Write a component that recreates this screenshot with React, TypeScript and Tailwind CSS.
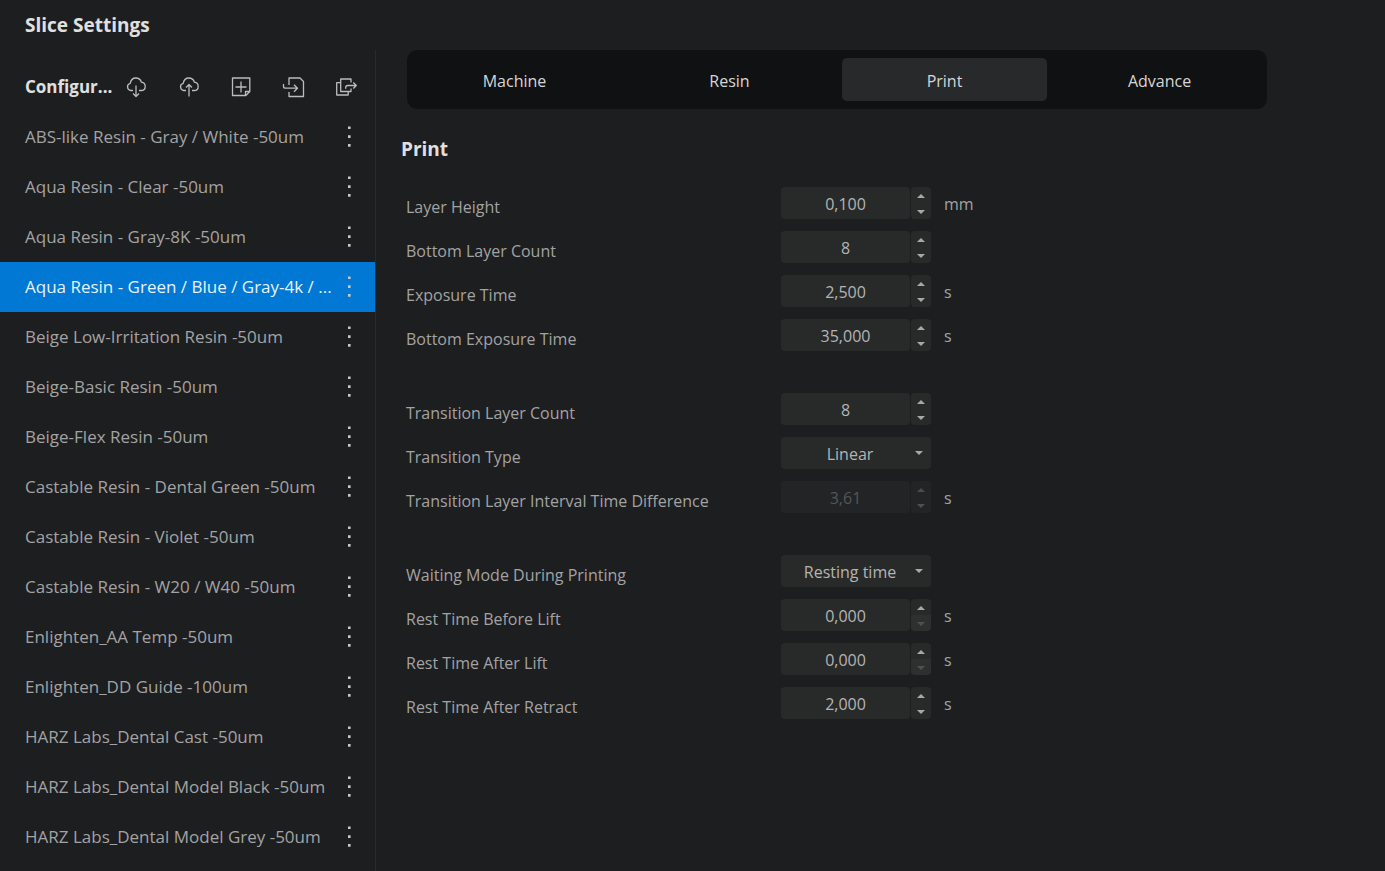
import { useState } from 'react';
import type { ReactNode } from 'react';

type Field = {
  id: string;
  label: string;
  value: string;
  unit?: string;
  decimals?: number;
  options?: string[];
  disabled?: boolean;
};

const profiles = [
  'ABS-like Resin - Gray / White -50um',
  'Aqua Resin - Clear -50um',
  'Aqua Resin - Gray-8K -50um',
  'Aqua Resin - Green / Blue / Gray-4k / ...',
  'Beige Low-Irritation Resin -50um',
  'Beige-Basic Resin -50um',
  'Beige-Flex Resin -50um',
  'Castable Resin - Dental Green -50um',
  'Castable Resin - Violet -50um',
  'Castable Resin - W20 / W40 -50um',
  'Enlighten_AA Temp -50um',
  'Enlighten_DD Guide -100um',
  'HARZ Labs_Dental Cast -50um',
  'HARZ Labs_Dental Model Black -50um',
  'HARZ Labs_Dental Model Grey -50um',
];

const tabs = ['Machine', 'Resin', 'Print', 'Advance'];

const groups: Field[][] = [
  [
    { id: 'layer-height', label: 'Layer Height', value: '0,100', unit: 'mm', decimals: 3 },
    { id: 'bottom-layers', label: 'Bottom Layer Count', value: '8' },
    { id: 'exposure', label: 'Exposure Time', value: '2,500', unit: 's', decimals: 3 },
    { id: 'bottom-exposure', label: 'Bottom Exposure Time', value: '35,000', unit: 's', decimals: 3 },
  ],
  [
    { id: 'transition-layers', label: 'Transition Layer Count', value: '8' },
    { id: 'transition-type', label: 'Transition Type', value: 'Linear', options: ['Linear'] },
    {
      id: 'transition-diff',
      label: 'Transition Layer Interval Time Difference',
      value: '3,61',
      unit: 's',
      decimals: 2,
      disabled: true,
    },
  ],
  [
    { id: 'waiting-mode', label: 'Waiting Mode During Printing', value: 'Resting time', options: ['Resting time'] },
    { id: 'rest-before-lift', label: 'Rest Time Before Lift', value: '0,000', unit: 's', decimals: 3 },
    { id: 'rest-after-lift', label: 'Rest Time After Lift', value: '0,000', unit: 's', decimals: 3 },
    { id: 'rest-after-retract', label: 'Rest Time After Retract', value: '2,000', unit: 's', decimals: 3 },
  ],
];

const cloudPath =
  'M7 13.5H4.600A3.700 3.700 0 0 1 4.200 6.300C4.800 3.200 6.900 1 9.800 1c2.700 0 4.800 1.500 5.600 4.200 2.200.3 3.800 2 3.800 4.200 0 2.400-1.700 4.100-4 4.100H13';

const toolbar: { name: string; icon: ReactNode }[] = [
  {
    name: 'Download',
    icon: (
      <>
        <path d={cloudPath} />
        <path d="M10 8.5v11M7 16.5l3 3 3-3" />
      </>
    ),
  },
  {
    name: 'Upload',
    icon: (
      <>
        <path d={cloudPath} />
        <path d="M10 19.5v-12M7 10.5l3-3 3 3" />
      </>
    ),
  },
  {
    name: 'New',
    icon: (
      <>
        <path d="M1.5 1h17.3v13.5l-4 4H1.5z" />
        <path d="M14.5 18.5v-4h4.3M10 4.5v11M4.5 10h11" />
      </>
    ),
  },
  {
    name: 'Import',
    icon: (
      <>
        <path d="M5 8V1h11l3.500 3.500V19.500H5v-4.500" />
        <path d="M-.5 7v2.200q0 2 2 2h12M10 7.700l3.500 3.500-3.500 3.500" />
      </>
    ),
  },
  {
    name: 'Export',
    icon: (
      <>
        <path d="M4.500 5.700H.7V18h11.500v-3.500" />
        <path d="M15 5.500V2H4.700v12.500H15v-3" />
        <path d="M9.700 11.700v-1.200q0-2 2-2h8.600M17.300 5.500l3 3-3 3" />
      </>
    ),
  },
];

const Stepper = ({ field }: { field: Field }) => {
  const [value, setValue] = useState(field.value);
  const decimals = field.decimals ?? 0;
  const amount = Number(value.replace(',', '.'));

  const step = (dir: number) => {
    const next = Math.max(0, amount + dir * (decimals ? 0.1 : 1));
    setValue(next.toFixed(decimals).replace('.', ','));
  };

  return (
    <div className="flex h-8 gap-px">
      <input
        id={field.id}
        value={value}
        disabled={field.disabled}
        onChange={(e) => setValue(e.target.value)}
        className="w-full min-w-0 flex-1 rounded-sm bg-[#282a2a] pt-0.5 text-center text-[#b4b4b4] outline-none disabled:bg-[#232426] disabled:text-[#555658]"
      />
      <div className="flex w-5 flex-col overflow-hidden rounded-sm">
        <button
          aria-label={`Increase ${field.label}`}
          disabled={field.disabled}
          onClick={() => step(1)}
          className="flex flex-1 items-center justify-center bg-[#282a2a] pt-0.5 text-[#a8a8a8] disabled:bg-[#232426] disabled:text-[#4a4b4d]"
        >
          <svg className="h-1 w-2" viewBox="0 0 8 4" fill="currentColor">
            <path d="M4 0l4 4H0z" />
          </svg>
        </button>
        <button
          aria-label={`Decrease ${field.label}`}
          disabled={field.disabled || amount <= 0}
          onClick={() => step(-1)}
          className={`flex flex-1 items-center justify-center bg-[#282a2a] pt-0.5 text-[#a8a8a8] disabled:text-[#4f5051] ${
            field.disabled ? 'disabled:bg-[#232426]' : 'disabled:bg-[#2e3030]'
          }`}
        >
          <svg className="h-1 w-2" viewBox="0 0 8 4" fill="currentColor">
            <path d="M0 0h8L4 4z" />
          </svg>
        </button>
      </div>
    </div>
  );
};

const Dropdown = ({ field }: { field: Field }) => (
  <div className="relative h-8">
    <select
      id={field.id}
      defaultValue={field.value}
      className="h-8 w-full appearance-none rounded-sm bg-[#282a2a] pt-0.5 pr-3 text-[#b4b4b4] outline-none [text-align-last:center]"
    >
      {field.options?.map((option) => (
        <option key={option}>{option}</option>
      ))}
    </select>
    <svg
      className="pointer-events-none absolute top-3.5 right-2 h-1 w-2 text-[#a8a8a8]"
      viewBox="0 0 8 4"
      fill="currentColor"
    >
      <path d="M0 0h8L4 4z" />
    </svg>
  </div>
);

const App = () => {
  const [selected, setSelected] = useState(3);
  const [tab, setTab] = useState('Print');

  return (
    <div className="flex min-h-screen flex-col bg-[#1d1e20] font-['Open_Sans','Noto_Sans',sans-serif] text-[16px] leading-6 text-[#a3a3a3]">
      <header className="flex h-[50px] items-center px-[25px]">
        <h1 className="text-[19px] font-bold text-[#e0e0e0]">Slice Settings</h1>
      </header>

      <div className="flex flex-1">
        <aside className="w-[376px] shrink-0 border-r border-[#292a2c] pt-3">
          <div className="flex h-[50px] items-center gap-[14px] pr-[19px] pl-[25px]">
            <h2 className="w-[87px] shrink-0 text-[17px] font-bold whitespace-nowrap text-[#e0e0e0]">Configur...</h2>
            <div className="flex flex-1 items-center justify-between">
              {toolbar.map((item) => (
                <button key={item.name} aria-label={item.name}>
                  <svg
                    className="size-5 overflow-visible"
                    viewBox="0 0 20 20"
                    fill="none"
                    stroke="#bcbcbc"
                    strokeWidth="1.3"
                    strokeLinejoin="round"
                  >
                    {item.icon}
                  </svg>
                </button>
              ))}
            </div>
          </div>

          <ul className="text-[17px]">
            {profiles.map((profile, i) => (
              <li
                key={profile}
                className={`flex h-[50px] items-center pr-4 pl-[25px] ${
                  i === selected ? 'bg-[#0078d4] text-[#e8f2fa]' : ''
                }`}
              >
                <button onClick={() => setSelected(i)} className="h-full min-w-0 flex-1 text-left whitespace-nowrap">
                  {profile}
                </button>
                <button aria-label={`Options for ${profile}`} className="flex h-full w-5 items-center justify-center">
                  <svg className="h-6 w-1" viewBox="0 0 4 24" fill="#c8c8c8">
                    <path d="M1 1.500h2.600v2.600H1zM1 10.300h2.600v2.600H1zM1 19.100h2.600v2.600H1z" />
                  </svg>
                </button>
              </li>
            ))}
          </ul>
        </aside>

        <main className="min-w-0 flex-1 pr-8 pl-[25px]">
          <div role="tablist" className="ml-1.5 grid h-[59px] max-w-[860px] grid-cols-4 rounded-[10px] bg-[#101113] py-2">
            {tabs.map((name) => (
              <button
                key={name}
                role="tab"
                aria-selected={name === tab}
                onClick={() => setTab(name)}
                className={`mx-[5px] rounded-[5px] pt-0.5 text-[#d6d6d6] ${name === tab ? 'bg-[#28292b]' : ''}`}
              >
                {name}
              </button>
            ))}
          </div>

          <h2 className="mt-7 text-[19px] font-bold text-[#e0e0e0]">{tab}</h2>

          <form className="mt-[26px] ml-[5px] flex flex-col gap-[42px]" onSubmit={(e) => e.preventDefault()}>
            {groups.map((group) => (
              <div key={group[0].id} className="flex flex-col gap-3">
                {group.map((field) => (
                  <div key={field.id} className="grid h-8 grid-cols-[375px_150px_auto]">
                    <label htmlFor={field.id} className="pt-2">
                      {field.label}
                    </label>
                    {field.options ? <Dropdown field={field} /> : <Stepper field={field} />}
                    <span className="pt-[5px] pl-[13px]">{field.unit}</span>
                  </div>
                ))}
              </div>
            ))}
          </form>
        </main>
      </div>
    </div>
  );
};

export default App;
